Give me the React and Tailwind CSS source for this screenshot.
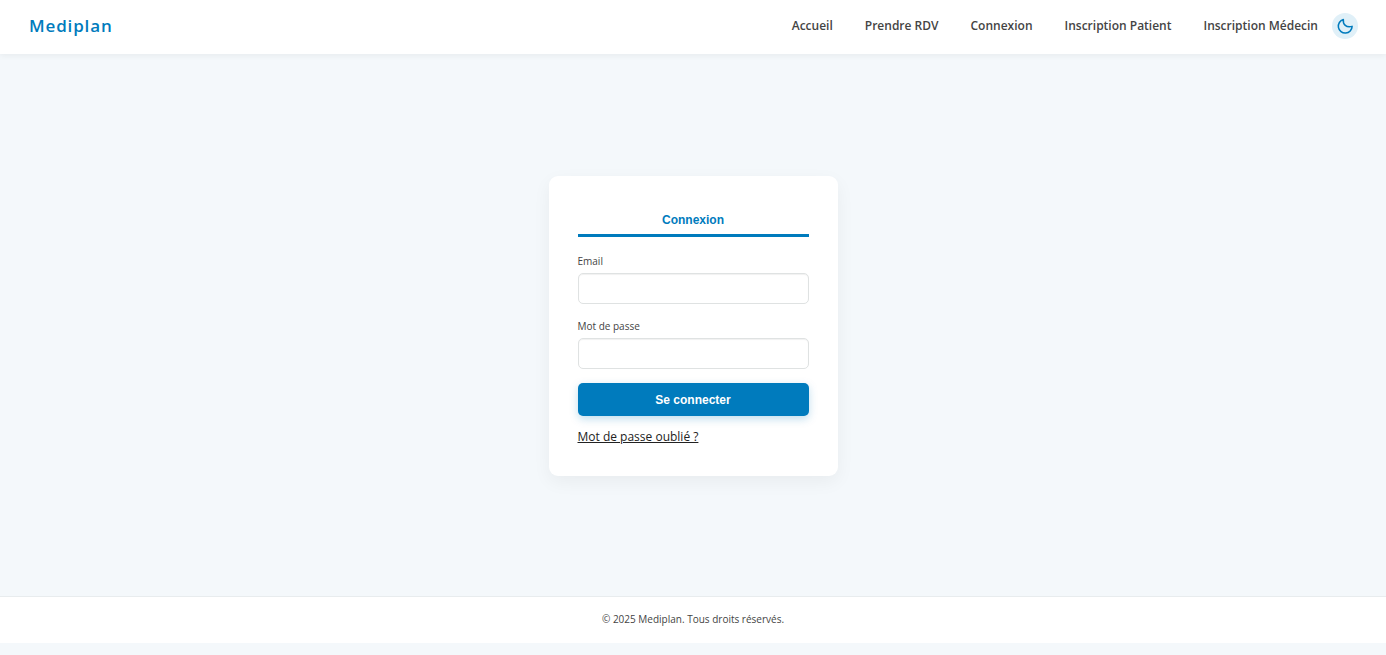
import React, { useState } from 'react';

const navLinks = [
  { label: 'Accueil', href: '#accueil' },
  { label: 'Prendre RDV', href: '#rdv' },
  { label: 'Connexion', href: '#connexion' },
  { label: 'Inscription Patient', href: '#inscription-patient' },
  { label: 'Inscription Médecin', href: '#inscription-medecin' },
];

const MoonIcon = () => (
  <svg
    className="h-[18px] w-[18px]"
    viewBox="0 0 24 24"
    fill="none"
    stroke="currentColor"
    strokeWidth="2"
    strokeLinecap="round"
    strokeLinejoin="round"
    aria-hidden="true"
  >
    <path d="M21.5 12.5A9.2 9.2 0 1 1 9.8 3.4C9 9.5 13.5 14.8 21.5 12.5z" />
  </svg>
);

const Navbar = () => (
  <header className="flex h-[54px] items-center justify-between bg-white pb-[2px] pl-[29px] pr-7 shadow-[0_2px_6px_rgba(0,0,0,0.05)]">
    <a href="#accueil" className="text-[17px] font-semibold tracking-wider text-[#007bbd]">
      Mediplan
    </a>
    <div className="flex items-center gap-[14px]">
      <nav className="flex items-center gap-8">
        {navLinks.map((link) => (
          <a key={link.href} href={link.href} className="text-xs font-semibold text-[#444444]">
            {link.label}
          </a>
        ))}
      </nav>
      <button
        type="button"
        aria-label="Activer le mode sombre"
        className="flex h-[26px] w-[26px] items-center justify-center rounded-full bg-[#e0f0f8] text-[#007bbd]"
      >
        <MoonIcon />
      </button>
    </div>
  </header>
);

const Field = ({ id, label, type, value, onChange }) => (
  <div className="mb-[14px]">
    <label htmlFor={id} className="mb-1 block text-[10px] leading-4 text-[#444444]">
      {label}
    </label>
    <input
      id={id}
      type={type}
      value={value}
      onChange={(e) => onChange(e.target.value)}
      className="block h-[31px] w-full rounded-[5px] border border-[#dfe2e2] bg-white px-3 text-xs shadow-[inset_0_1px_1px_rgba(0,0,0,0.06)] outline-none focus:border-[#007bbd]"
    />
  </div>
);

const LoginForm = () => {
  const [email, setEmail] = useState('');
  const [password, setPassword] = useState('');

  const handleSubmit = (e) => {
    e.preventDefault();
  };

  return (
    <div className="w-full max-w-[289px] rounded-[9px] bg-white p-[29px] shadow-[0_6px_18px_rgba(0,0,0,0.05)]">
      <button
        type="button"
        className="mb-4 block h-8 w-full border-b-3 border-[#007bbd] font-['Liberation_Sans',Arial,sans-serif] text-xs font-bold text-[#007bbd]"
      >
        Connexion
      </button>
      <form onSubmit={handleSubmit}>
        <Field id="email" label="Email" type="email" value={email} onChange={setEmail} />
        <Field id="password" label="Mot de passe" type="password" value={password} onChange={setPassword} />
        <button
          type="submit"
          className="block h-[33px] w-full rounded-[5px] bg-[#007bbd] font-['Liberation_Sans',Arial,sans-serif] text-xs font-bold text-white shadow-[0_3px_8px_rgba(0,123,189,0.25)]"
        >
          Se connecter
        </button>
      </form>
      <a href="#mot-de-passe" className="mt-3 inline-block text-xs leading-[18px] text-[#222222] underline">
        Mot de passe oublié ?
      </a>
    </div>
  );
};

const App = () => (
  <div className="flex min-h-screen flex-col bg-[#f4f8fb] pb-3 font-['Open_Sans',sans-serif]">
    <Navbar />
    <main className="flex flex-1 items-center justify-center pt-[2px]">
      <LoginForm />
    </main>
    <footer className="border-t border-[#e8ecee] bg-white pt-[13px] pb-[15px] text-center text-[10px] leading-[18px] text-[#444444]">
      © 2025 Mediplan. Tous droits réservés.
    </footer>
  </div>
);

export default App;
